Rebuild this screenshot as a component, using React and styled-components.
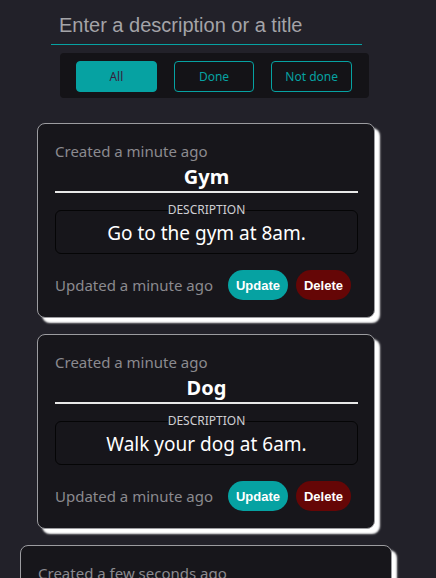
import styled, { createGlobalStyle } from "styled-components"

const teal = "#06a2a2"

const Global = createGlobalStyle`
  html, body {
    margin: 0;
    padding: 0;
    background: #222129;
    height: 100%;
    overflow: hidden;
  }
  * { box-sizing: border-box; }
`

const Page = styled.main`
  width: 412px;
  display: flex;
  flex-direction: column;
  align-items: center;
  padding-top: 5px;
`

const Search = styled.input`
  width: 311px;
  height: 40px;
  margin-left: 1px;
  background: transparent;
  border: none;
  border-bottom: 1px solid ${teal};
  outline: none;
  color: #ddd;
  font-family: "Liberation Sans", Arial, sans-serif;
  font-size: 20px;
  padding: 1px 8px 0;
  &::placeholder { color: #a4a4a8; }
`

const Filters = styled.div`
  margin-top: 8px;
  margin-left: 17px;
  width: 309px;
  height: 45px;
  background: #141317;
  border-radius: 4px;
  display: flex;
  gap: 17px;
  padding: 8px 17px 0 16px;
`

const FilterBtn = styled.button`
  width: 82px;
  height: 31px;
  border-radius: 4px;
  border: 1px solid ${teal};
  background: ${p => p.$active ? teal : "transparent"};
  color: ${p => p.$active ? "#3a1d3c" : teal};
  font-family: "Noto Sans", "Open Sans", sans-serif;
  font-size: 12px;
  cursor: pointer;
`

const List = styled.div`
  margin-top: 25px;
  display: flex;
  flex-direction: column;
  align-items: center;
  gap: 16px;
`

const Card = styled.section`
  width: ${p => p.$w}px;
  background: #17161b;
  border: 1px solid #9c9ca0;
  border-radius: 8px;
  box-shadow: 5px 5px 2px #ffffff;
  padding: 18px 16px 17px 17px;
  font-family: "Noto Sans", "Open Sans", sans-serif;
`

const Stamp = styled.div`
  color: #8b8a8f;
  font-size: 15px;
  line-height: 18px;
`

const Title = styled.h2`
  margin: 4px 0 0;
  color: #fff;
  font-size: 20px;
  font-weight: 700;
  text-align: center;
  line-height: 26px;
  padding-bottom: 1px;
  border-bottom: 2px solid #e8e8e8;
`

const Desc = styled.fieldset`
  margin: 10px 0 0;
  border: 1px solid #050506;
  border-radius: 6px;
  padding: 3px 8px 7px;
  text-align: center;
  color: #fff;
  font-size: 19px;
  line-height: 26px;
  legend {
    margin: 0 auto;
    padding: 0;
    font-size: 12px;
    line-height: 14px;
    color: #cfcfd3;
  }
`

const Footer = styled.div`
  margin-top: 16px;
  padding-right: 7px;
  display: flex;
  align-items: center;
`

const Updated = styled(Stamp)`
  margin-right: auto;
`

const Pill = styled.button`
  height: 30px;
  border: none;
  border-radius: 15px;
  padding: 0 8px;
  margin-left: ${p => p.$gap || 0}px;
  background: ${p => p.$danger ? "#650606" : teal};
  color: #fff;
  font-family: "Liberation Sans", Arial, sans-serif;
  font-size: 13px;
  font-weight: 700;
  cursor: pointer;
`

const todos = [
  { title: "Gym", desc: "Go to the gym at 8am.", created: "a minute ago", updated: "a minute ago", w: 338 },
  { title: "Dog", desc: "Walk your dog at 6am.", created: "a minute ago", updated: "a minute ago", w: 338 },
  { title: "Groceries", desc: "Buy milk, bread and eggs tonight.", created: "a few seconds ago", updated: "a few seconds ago", w: 372 },
]

export default function App() {
  return (
    <>
      <Global />
      <Page>
        <Search placeholder="Enter a description or a title" />
        <Filters>
          <FilterBtn $active>All</FilterBtn>
          <FilterBtn>Done</FilterBtn>
          <FilterBtn>Not done</FilterBtn>
        </Filters>
        <List>
          {todos.map(t => (
            <Card key={t.title} $w={t.w}>
              <Stamp>Created {t.created}</Stamp>
              <Title>{t.title}</Title>
              <Desc>
                <legend>DESCRIPTION</legend>
                {t.desc}
              </Desc>
              <Footer>
                <Updated>Updated {t.updated}</Updated>
                <Pill>Update</Pill>
                <Pill $danger $gap={8}>Delete</Pill>
              </Footer>
            </Card>
          ))}
        </List>
      </Page>
    </>
  )
}
